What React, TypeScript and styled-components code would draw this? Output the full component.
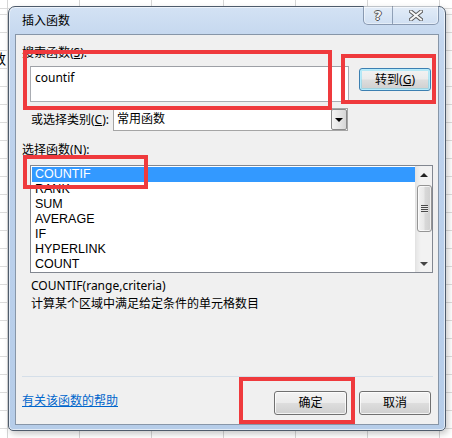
import React from "react";
import styled, { createGlobalStyle } from "styled-components";

const GlobalStyle = createGlobalStyle`
  html, body { margin: 0; padding: 0; background: #fff; }
  body {
    font-family: "Noto Sans", "Noto Sans CJK SC", sans-serif;
    font-size: 12px;
    color: #000;
  }
  * { box-sizing: border-box; }
`;

const Desktop = styled.div`
  position: relative;
  width: 452px;
  height: 438px;
  overflow: hidden;
  padding: 6px 0 0 8px;
  background-color: #fff;
  background-image:
    repeating-linear-gradient(90deg, #d6d6d6 0 1px, transparent 1px 72px),
    repeating-linear-gradient(180deg, #dcdcdc 0 1px, transparent 1px 18px);
  background-position: 7px 0, 0 14px;
`;

const HiddenCell = styled.span`
  position: absolute;
  left: -8px;
  top: 50px;
  font-size: 14px;
  line-height: 18px;
`;

const Window = styled.div`
  width: 438px;
  height: 425px;
  border: 1px solid #4e5b6b;
  border-radius: 7px 7px 5px 5px;
  background: linear-gradient(180deg, #d3e2f4 0%, #c3d6ee 8%, #bcd1ec 40%, #b6cde9 100%);
  box-shadow: inset 0 0 0 1px rgba(255, 255, 255, 0.6), 2px 3px 6px rgba(0, 0, 0, 0.22);
  display: flex;
  flex-direction: column;
  padding: 0 6px 5px 6px;
`;

const TitleBar = styled.div`
  height: 27px;
  display: flex;
  align-items: flex-start;
  justify-content: space-between;
`;

const Title = styled.span`
  line-height: 27px;
  padding-left: 7px;
  color: #000;
`;

const CaptionButtons = styled.div`
  display: flex;
  height: 19px;
  margin-top: -1px;
  border: 1px solid rgba(70, 90, 120, 0.55);
  border-top: none;
  border-radius: 0 0 5px 5px;
  background: linear-gradient(180deg, rgba(255, 255, 255, 0.35), rgba(255, 255, 255, 0.1));
  box-shadow: inset 0 0 0 1px rgba(255, 255, 255, 0.45);
  overflow: hidden;
`;

const CaptionButton = styled.div<{ $w: number; $divider?: boolean }>`
  width: ${(p) => p.$w}px;
  display: flex;
  align-items: center;
  justify-content: center;
  border-right: ${(p) => (p.$divider ? "1px solid rgba(70, 90, 120, 0.5)" : "none")};
`;

const HelpGlyph = styled.span`
  font-family: "DejaVu Sans", sans-serif;
  font-weight: bold;
  font-size: 13px;
  line-height: 13px;
  color: #f7f7f7;
  text-shadow: 1px 0 0 #555, -1px 0 0 #555, 0 1px 0 #555, 0 -1px 0 #555;
`;

const Client = styled.div`
  flex: 1;
  background: #f0f0f0;
  border: 1px solid #8796a8;
  display: flex;
  flex-direction: column;
  padding: 9px 7px 9px 6px;
`;

const FieldLabel = styled.div<{ $indent?: number }>`
  line-height: 18px;
  height: 18px;
  margin-left: ${(p) => p.$indent ?? 0}px;
`;

const Key = styled.span`
  text-decoration: underline;
`;

const SearchRow = styled.div`
  display: flex;
  align-items: flex-start;
  margin-top: 4px;
`;

const SearchBox = styled.div`
  width: 319px;
  height: 36px;
  margin-left: 8px;
  background: #fff;
  border: 1px solid #a9acb2;
  border-top-color: #9da0a6;
  padding: 2px 4px;
  line-height: 18px;
`;

const PushButton = styled.div<{ $w: number; $default?: boolean }>`
  width: ${(p) => p.$w}px;
  height: ${(p) => (p.$default ? 23 : 24)}px;
  display: flex;
  align-items: center;
  justify-content: center;
  border-radius: 3px;
  border: 1px solid ${(p) => (p.$default ? "#3c7fb1" : "#707070")};
  background: linear-gradient(180deg, #f3f3f3 0%, #ebebeb 48%, #dddddd 52%, #cfcfcf 100%);
  box-shadow: ${(p) =>
    p.$default ? "inset 0 0 0 1px #b7ecfc, inset 0 0 0 2px rgba(72, 216, 251, 0.35)" : "inset 0 0 0 1px rgba(255,255,255,0.75)"};
  line-height: 18px;
`;

const GoButton = styled(PushButton)`
  margin-left: 10px;
  margin-top: 2px;
`;

const CategoryRow = styled.div`
  display: flex;
  align-items: center;
  margin-top: 6px;
  height: 23px;
`;

const CategoryLabel = styled.span`
  width: 82px;
  margin-left: 9px;
  line-height: 18px;
`;

const Dropdown = styled.div`
  width: 235px;
  height: 23px;
  display: flex;
  border: 1px solid #a5a5a5;
  background: #fff;
`;

const DropdownValue = styled.span`
  flex: 1;
  padding-left: 3px;
  line-height: 20px;
`;

const DropdownArrow = styled.div`
  width: 16px;
  display: flex;
  align-items: center;
  justify-content: center;
  border: 1px solid #8a8a8a;
  border-radius: 2px;
  background: linear-gradient(90deg, #f4f4f4 0%, #e6e6e6 50%, #d6d6d6 100%);
`;

const Triangle = styled.span<{ $up?: boolean; $color?: string }>`
  width: 0;
  height: 0;
  border-left: 4px solid transparent;
  border-right: 4px solid transparent;
  ${(p) =>
    p.$up
      ? `border-bottom: 4px solid ${p.$color ?? "#000"};`
      : `border-top: 4px solid ${p.$color ?? "#000"};`}
`;

const SectionLabel = styled(FieldLabel)`
  margin-top: 10px;
`;

const ListBox = styled.div`
  margin-top: 6px;
  margin-left: 8px;
  width: 403px;
  height: 108px;
  border: 1px solid #828790;
  background: #fff;
  display: flex;
`;

const ListItems = styled.div`
  flex: 1;
  padding: 1px 0 0 1px;
`;

const ListItem = styled.div<{ $selected?: boolean }>`
  height: 15px;
  line-height: 15px;
  padding-left: 3px;
  font-family: "Liberation Sans", Arial, sans-serif;
  font-size: 12.5px;
  background: ${(p) => (p.$selected ? "#3399ff" : "transparent")};
  color: ${(p) => (p.$selected ? "#fff" : "#000")};
`;

const ScrollBar = styled.div`
  width: 17px;
  background: linear-gradient(90deg, #e6e6e6 0%, #f2f2f2 30%, #f2f2f2 100%);
  border-left: 1px solid #e3e3e3;
  display: flex;
  flex-direction: column;
  align-items: center;
`;

const ScrollArrow = styled.div`
  height: 17px;
  width: 100%;
  display: flex;
  align-items: center;
  justify-content: center;
`;

const Thumb = styled.div`
  width: 15px;
  height: 47px;
  margin-top: 2px;
  border: 1px solid #959595;
  border-radius: 3px;
  background: linear-gradient(90deg, #f3f3f3 0%, #e8e8e8 45%, #d8d8d8 55%, #cfcfcf 100%);
  box-shadow: inset 0 0 0 1px rgba(255, 255, 255, 0.7);
  display: flex;
  align-items: center;
  justify-content: center;
`;

const Grip = styled.span`
  width: 7px;
  height: 8px;
  background: repeating-linear-gradient(180deg, #4a4a4a 0 1px, #e8e8e8 1px 2px);
`;

const Spacer = styled.div`
  flex: 1;
`;

const Description = styled.div`
  margin-left: 9px;
  line-height: 18px;
  height: 18px;
`;

const SignatureLine = styled(Description)`
  margin-top: 4px;
`;

const Separator = styled.div`
  height: 1px;
  width: 411px;
  background: #d5dfe9;
`;

const Footer = styled.div`
  margin-top: 14px;
  display: flex;
  align-items: flex-start;
  gap: 12px;
`;

const HelpLink = styled.a`
  color: #0066cc;
  text-decoration: underline;
  line-height: 18px;
  margin-top: 1px;
  margin-right: auto;
  cursor: pointer;
`;

const Annotation = styled.div<{ $x: number; $y: number; $w: number; $h: number }>`
  position: absolute;
  left: ${(p) => p.$x}px;
  top: ${(p) => p.$y}px;
  width: ${(p) => p.$w}px;
  height: ${(p) => p.$h}px;
  border: 4px solid #ef3a3d;
  pointer-events: none;
`;

const functions = ["COUNTIF", "RANK", "SUM", "AVERAGE", "IF", "HYPERLINK", "COUNT"];

export default function App() {
  return (
    <>
      <GlobalStyle />
      <Desktop>
        <HiddenCell>数</HiddenCell>
        <Window>
          <TitleBar>
            <Title>插入函数</Title>
            <CaptionButtons>
              <CaptionButton $w={29} $divider>
                <HelpGlyph>?</HelpGlyph>
              </CaptionButton>
              <CaptionButton $w={45}>
                <svg width="14" height="11" viewBox="0 0 14 11">
                  <path d="M2 1.5 L12 9.5 M12 1.5 L2 9.5" stroke="#5a5a5a" strokeWidth="4" strokeLinecap="square" />
                  <path d="M2 1.5 L12 9.5 M12 1.5 L2 9.5" stroke="#f6f6f6" strokeWidth="2" strokeLinecap="square" />
                </svg>
              </CaptionButton>
            </CaptionButtons>
          </TitleBar>
          <Client>
            <FieldLabel>
              搜索函数(<Key>S</Key>):
            </FieldLabel>
            <SearchRow>
              <SearchBox>countif</SearchBox>
              <GoButton $w={72} $default>
                转到(<Key>G</Key>)
              </GoButton>
            </SearchRow>
            <CategoryRow>
              <CategoryLabel>
                或选择类别(<Key>C</Key>):
              </CategoryLabel>
              <Dropdown>
                <DropdownValue>常用函数</DropdownValue>
                <DropdownArrow>
                  <Triangle />
                </DropdownArrow>
              </Dropdown>
            </CategoryRow>
            <SectionLabel>
              选择函数(<Key>N</Key>):
            </SectionLabel>
            <ListBox>
              <ListItems>
                {functions.map((f, i) => (
                  <ListItem key={f} $selected={i === 0}>
                    {f}
                  </ListItem>
                ))}
              </ListItems>
              <ScrollBar>
                <ScrollArrow>
                  <Triangle $up $color="#222" />
                </ScrollArrow>
                <Thumb>
                  <Grip />
                </Thumb>
                <Spacer />
                <ScrollArrow>
                  <Triangle $color="#444" />
                </ScrollArrow>
              </ScrollBar>
            </ListBox>
            <SignatureLine>COUNTIF(range,criteria)</SignatureLine>
            <Description>计算某个区域中满足给定条件的单元格数目</Description>
            <Spacer />
            <Separator />
            <Footer>
              <HelpLink>有关该函数的帮助</HelpLink>
              <PushButton $w={73}>确定</PushButton>
              <PushButton $w={72}>取消</PushButton>
            </Footer>
          </Client>
        </Window>
        <Annotation $x={23} $y={50} $w={309} $h={60} />
        <Annotation $x={341} $y={54} $w={95} $h={50} />
        <Annotation $x={23} $y={155} $w={125} $h={34} />
        <Annotation $x={239} $y={377} $w={116} $h={47} />
      </Desktop>
    </>
  );
}
